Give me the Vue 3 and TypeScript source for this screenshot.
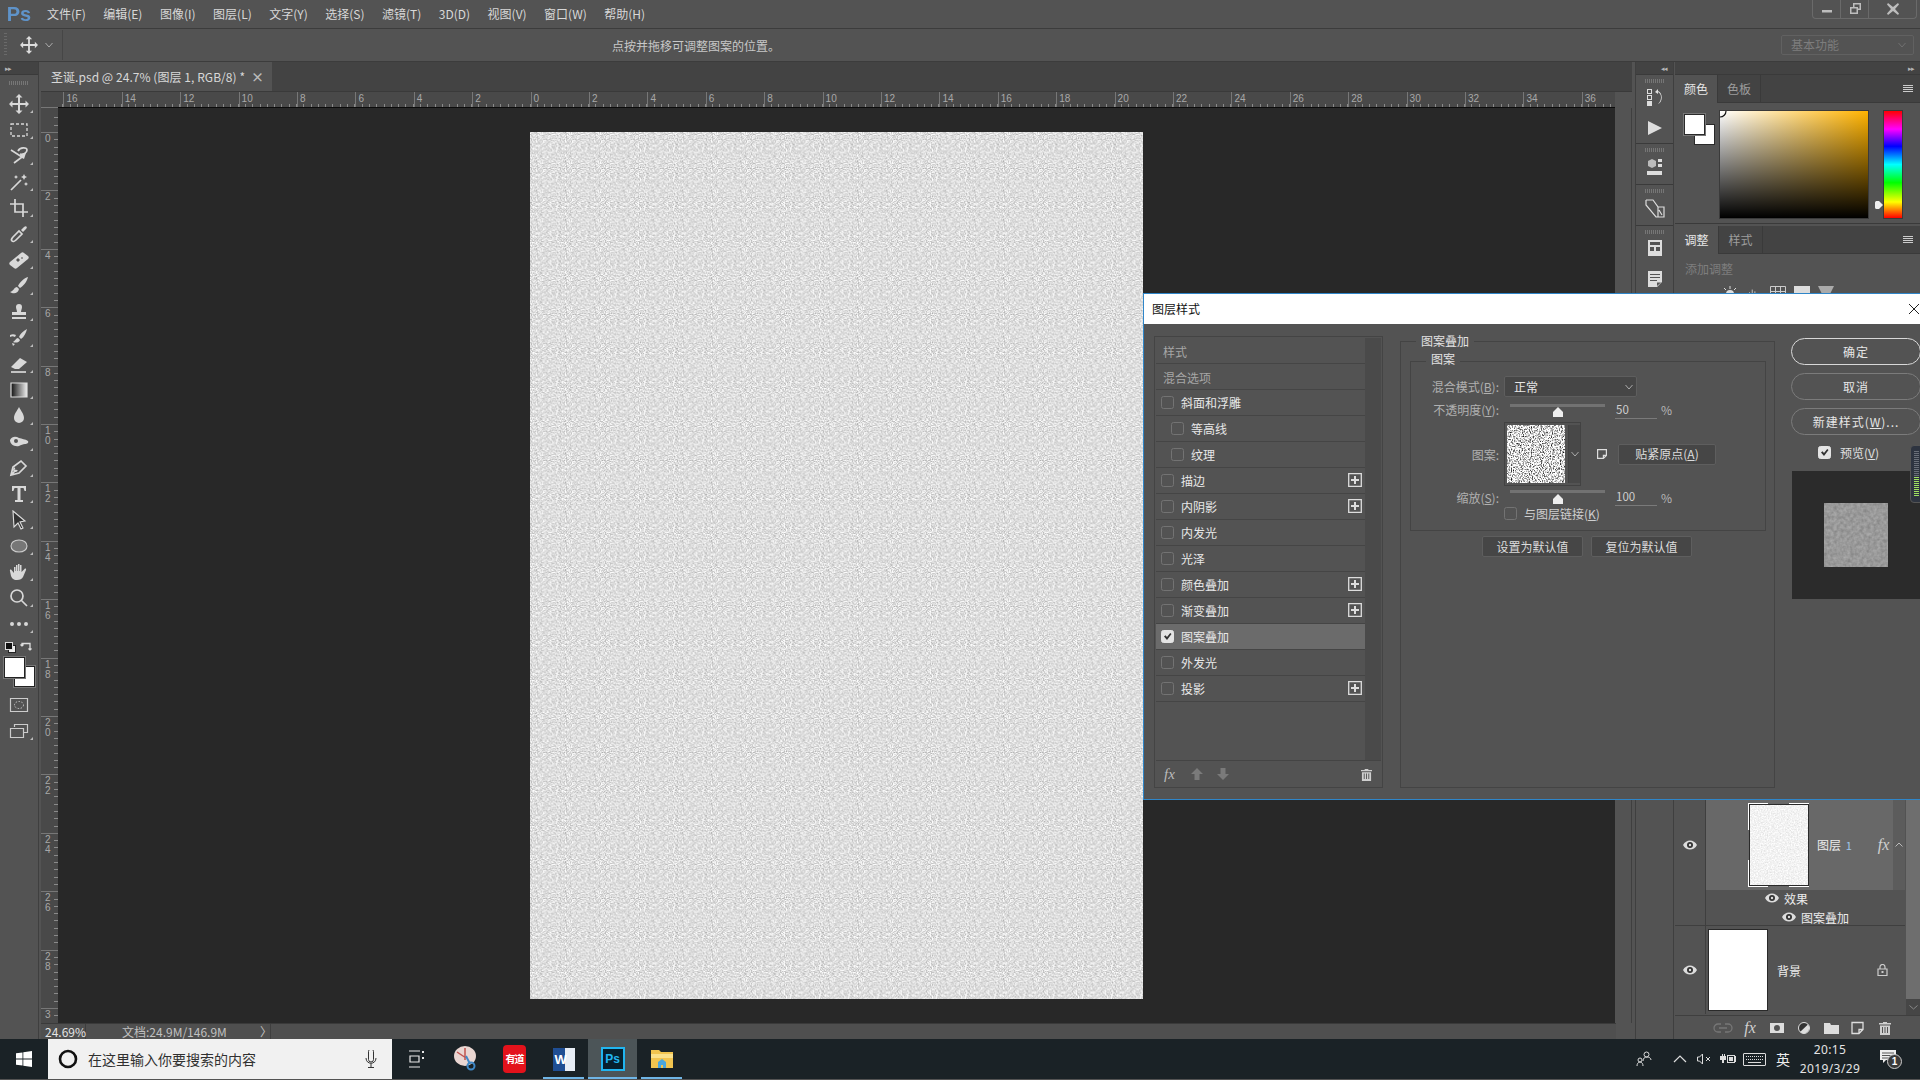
<script setup lang="ts">
const menus = ['文件(F)', '编辑(E)', '图像(I)', '图层(L)', '文字(Y)', '选择(S)', '滤镜(T)', '3D(D)', '视图(V)', '窗口(W)', '帮助(H)']

const moveArrow = 'M10 0l3.500 3.500H11V9h5.500V6.500L20 10l-3.500 3.500V11H11v5.500h2.500L10 20l-3.500-3.500H9V11H3.500v2.500L0 10l3.500-3.500V9H9V3.500H6.500z'

const tools: string[][] = [
  [moveArrow],
  ['-M2 4h16v12H2z'],
  ['~M2 4l11 7-8 6', '~M9 5c2-4 9-4 9-1s-4 5-7 4', 'M12 8l5-1-2 6-4-2z'],
  ['~M2 18L12 8', 'M15 2l1 2 2 1-2 1-1 2-1-2-2-1 2-1zM7 3l.7 1.3L9 5l-1.3.7L7 7l-.7-1.3L5 5l1.3-.7zM17 10l.7 1.3 1.3.7-1.3.7-.7 1.3-.7-1.3-1.3-.7 1.3-.7z'],
  ['~M6 1v13h13', '~M1 6h13v13'],
  ['~M3 17c-1-1 0-3 1-4l6-6 3 3-6 6c-1 1-3 2-4 1z', 'M12 6l3-3c2-2 4 0 2 2l-3 3z'],
  ['M1 12L12 3c1-1 2-1 3 0l4 3c1 1 1 2 0 3L8 18c-1 1-2 1-3 0L1 15c-1-1-1-2 0-3zM9 8l-2 2 2 2 2-2zM13 7l-1 1 1 1 1-1z'],
  ['M19 1c-4 1-8 5-10 9l2 2c3-2 7-6 8-11zM8 11c-3 0-3 4-7 5 3 2 8 2 9-3z'],
  ['M7 5a3 3 0 116 0c0 2-1 3-1 5h5v3H3v-3h5c0-2-1-3-1-5zM3 15h14v2H3z'],
  ['M18 1c-4 2-7 5-8 8l2 2c3-2 5-6 6-10zM9 10c-2 0-3 3-5 4 2 1 6 1 7-2zM1 7c2-1 4-1 6 0l-1 2C4 8 3 8 1 9zM3 15l3 1-2 2z'],
  ['M2 13l9-9 7 4-8 7H6z', '~M2 18h15'],
  ['=M2 3h16v14H2z'],
  ['M10 1c2 4 5 7 5 11a5 5 0 11-10 0c0-4 3-7 5-11z'],
  ['M1 8c2-4 6-4 9-2 3 1 6 1 9 3 1 2-1 3-3 3-2 0-4 1-6 2-5 1-9-2-9-6zM7 7a2 2 0 100 4 2 2 0 000-4z'],
  ['~M2 17l2-8 8-6 5 5-7 7zM2 17l5-5', '~M6 10a1.6 1.6 0 102 2'],
  ['M3 2h14v5h-1.4L14.5 4h-3v12H14v2H6v-2h2.5V4h-3L4.4 7H3z'],
  ['&M4 1l12 10-5 1 3 6-2 1-3-6-4 4z'],
  ['+M10 4c5 0 8 2.700 8 6s-3 6-8 6-8-2.700-8-6 3-6 8-6z'],
  ['M5 9V5h1.500v4H7V3h1.500v6H9V2h1.500v7h.5V3h1.500v7l3-3c1-1 2 0 1.500 1l-3 7c-1 2-3 3-6 3-4 0-5-2-6-4L1 9c-.5-1 .5-2 1.500-1L5 11z'],
  ['~M8 2a6 6 0 100 12A6 6 0 008 2zM12.500 12.500L18 18'],
  ['M3 8a2 2 0 110 4 2 2 0 010-4zM10 8a2 2 0 110 4 2 2 0 010-4zM17 8a2 2 0 110 4 2 2 0 010-4z'],
]
const toolPath = (p: string) => p.replace(/^[~\-=&+]/, '')
const toolClass = (p: string) => ({ '~': 'st', '-': 'dash', '=': 'gd', '&': 'dk', '+': 'gy' }[p[0]] ?? 'fl')

const minorX = Array.from({ length: 214 }, (_, i) => i * 7.3 + 4.4)
const majorX = Array.from({ length: 27 }, (_, i) => ({ x: 5.4 + i * 58.4, n: Math.abs(16 - i * 2) }))
const minorY = Array.from({ length: 124 }, (_, i) => i * 7.3 + 9.4)
const majorY = Array.from({ length: 16 }, (_, i) => ({ y: 24 + i * 58.4, d: i === 15 ? ['3'] : String(i * 2).split('') }))

const styles = [
  { t: '样式', head: true },
  { t: '混合选项', head: true },
  { t: '斜面和浮雕' },
  { t: '等高线', sub: true },
  { t: '纹理', sub: true },
  { t: '描边', plus: true },
  { t: '内阴影', plus: true },
  { t: '内发光' },
  { t: '光泽' },
  { t: '颜色叠加', plus: true },
  { t: '渐变叠加', plus: true },
  { t: '图案叠加', on: true },
  { t: '外发光' },
  { t: '投影', plus: true },
]
</script>

<template>
  <div class="app">
    <svg class="defs" width="0" height="0">
      <defs>
        <linearGradient id="toolGrad" x1="0" x2="1" y1="0" y2="0">
          <stop offset="0" stop-color="#111" /><stop offset="1" stop-color="#eee" />
        </linearGradient>
        <filter id="paperNoise" x="0" y="0" width="100%" height="100%" color-interpolation-filters="sRGB">
          <feTurbulence type="fractalNoise" baseFrequency="0.82" numOctaves="1" seed="7" stitchTiles="stitch" />
          <feColorMatrix result="fine" values="1 0 0 0 0 1 0 0 0 0 1 0 0 0 0 0 0 0 0 1" />
          <feTurbulence type="fractalNoise" baseFrequency="0.3" numOctaves="1" seed="4" stitchTiles="stitch" />
          <feColorMatrix result="coarse" values="1 0 0 0 0 1 0 0 0 0 1 0 0 0 0 0 0 0 0 1" />
          <feComposite in="fine" in2="coarse" operator="arithmetic" k1="0" k2="0.72" k3="0.2" k4="0.41" />
        </filter>
        <filter id="swatchNoise" x="0" y="0" width="100%" height="100%" color-interpolation-filters="sRGB">
          <feTurbulence type="fractalNoise" baseFrequency="0.9 0.7" numOctaves="2" seed="3" />
          <feColorMatrix values="2.400 0 0 0 -0.35 2.400 0 0 0 -0.35 2.400 0 0 0 -0.35 0 0 0 0 1" />
        </filter>
        <filter id="thumbNoise" x="0" y="0" width="100%" height="100%" color-interpolation-filters="sRGB">
          <feTurbulence type="fractalNoise" baseFrequency="0.7" numOctaves="2" seed="5" />
          <feColorMatrix values="0.2 0 0 0 0.85 0.2 0 0 0 0.85 0.2 0 0 0 0.85 0 0 0 0 1" />
        </filter>
        <filter id="prevNoise" x="0" y="0" width="100%" height="100%" color-interpolation-filters="sRGB">
          <feTurbulence type="fractalNoise" baseFrequency="0.3" numOctaves="2" seed="9" />
          <feColorMatrix values="0.2 0 0 0 0.5 0.2 0 0 0 0.5 0.2 0 0 0 0.5 0 0 0 0 1" />
        </filter>
        <pattern id="paperTile" width="29.2" height="29.2" patternUnits="userSpaceOnUse">
          <rect width="29.2" height="29.2" filter="url(#paperNoise)" />
        </pattern>
        <symbol id="eye" viewBox="0 0 14 10">
          <path d="M0 5c3-6 11-6 14 0-3 6-11 6-14 0z" fill="#ddd" />
          <circle cx="7" cy="5" r="3" fill="#333" />
          <circle cx="7" cy="5" r="1.200" fill="#ddd" />
        </symbol>
        <symbol id="plus" viewBox="0 0 14 14">
          <path d="M.7.7h12.600v12.600H.7z" fill="none" stroke="#ddd" stroke-width="1.300" />
          <path d="M6 3h2v3h3v2H8v3H6V8H3V6h3z" fill="#ddd" />
        </symbol>
        <symbol id="check" viewBox="0 0 13 13">
          <path d="M3 6.500l1.500-1.200L6 7l3.200-4 1.300 1L6 10z" fill="#333" />
        </symbol>
        <symbol id="trash" viewBox="0 0 12 14">
          <path d="M4 1h4v1h4v1.500H0V2h4zM1 4.500h10V14H1zM3 6v6h1V6zM5.500 6v6h1V6zM8 6v6h1V6z" fill="#cfcfcf" fill-rule="evenodd" />
        </symbol>
      </defs>
    </svg>

    <header class="menubar">
      <span class="ps-logo">Ps</span>
      <nav class="menus"><span v-for="m in menus" :key="m">{{ m }}</span></nav>
      <div class="win-ctl">
        <span class="wc"><svg width="12" height="12" viewBox="0 0 12 12"><path d="M1 7h10v2.500H1z" /></svg></span>
        <span class="wc"><svg width="12" height="12" viewBox="0 0 12 12"><path fill-rule="evenodd" d="M4 0h8v7H9v4H1V4h3zM5.500 1.500V4H9v1.500h1.500v-4zM2.500 5.500v4h5v-4z" /></svg></span>
        <span class="wc wc-x"><svg width="12" height="12" viewBox="0 0 12 12"><path d="M1 0l5 4 5-4 1 1.500L8 6l4 4.500-1 1.500-5-4-5 4-1-1.500L4 6 0 1.500z" /></svg></span>
      </div>
    </header>

    <section class="options">
      <i class="grip-v"></i>
      <svg class="opt-move" width="18" height="18" viewBox="0 0 20 20"><path fill="#ddd" :d="moveArrow" /></svg>
      <svg class="opt-chev" width="8" height="6" viewBox="0 0 8 6"><path d="M.5 1L4 5l3.500-4" fill="none" stroke="#aaa" /></svg>
      <i class="opt-div"></i>
      <span class="opt-hint">点按并拖移可调整图案的位置。</span>
      <span class="workspace">基本功能<svg width="8" height="6" viewBox="0 0 8 6"><path d="M.5 1L4 5l3.500-4" fill="none" stroke="#707070" /></svg></span>
    </section>

    <main class="main">
      <aside class="toolbar">
        <div class="dock-head left-head"><span>▸▸</span></div>
        <div class="tb-grip"><i></i></div>
        <div v-for="(t, i) in tools" :key="i" class="tool">
          <svg width="20" height="20" viewBox="0 0 20 20">
            <path v-for="(p, j) in t" :key="j" :d="toolPath(p)" :class="toolClass(p)" />
          </svg>
          <i class="corner"></i>
        </div>
        <div class="mini-row">
          <svg width="11" height="11" viewBox="0 0 11 11"><rect x="3.500" y="3.500" width="7" height="7" fill="#eee" stroke="#222" /><rect x=".5" y=".5" width="7" height="7" fill="#111" stroke="#ddd" /></svg>
          <svg width="12" height="11" viewBox="0 0 12 11"><path fill="none" stroke="#ddd" stroke-width="1.300" d="M2 4V1.500h8V8M2 4L.5 2.500M2 4l1.500-1.500M10 8L8.500 6.500M10 8l1.500-1.500" /></svg>
        </div>
        <div class="swatches"><i class="sw-bg"></i><i class="sw-fg"></i></div>
        <div class="tool tool-qm">
          <svg width="20" height="16" viewBox="0 0 20 16"><path d="M1.500 1.500h17v13h-17z" fill="none" stroke="#ccc" stroke-width="1.200" /><ellipse cx="10" cy="8" rx="4.500" ry="3.500" fill="none" stroke="#ccc" stroke-dasharray="1.500 1.500" /></svg>
        </div>
        <div class="tool">
          <svg width="20" height="16" viewBox="0 0 20 16"><path d="M5.500 4V1.500h13v8h-4M1.500 5.500h13v9h-13z" fill="none" stroke="#ccc" stroke-width="1.200" /></svg>
          <i class="corner"></i>
        </div>
      </aside>

      <div class="center">
        <div class="tabbar">
          <div class="tab"><span>圣诞.psd @ 24.7% (图层 1, RGB/8) *</span><b>×</b></div>
        </div>
        <div class="work">
          <div class="ruler-corner"></div>
          <svg class="ruler-top" width="1557" height="16">
            <path v-for="x in minorX" :key="x" :d="`M${Math.round(x) + 0.5} 12v3`" stroke="#8a8a8a" />
            <g v-for="m in majorX" :key="m.x">
              <path :d="`M${Math.round(m.x) + 0.5} 0v15`" stroke="#777" />
              <text :x="m.x + 3" y="10" class="rtxt">{{ m.n }}</text>
            </g>
            <path d="M0 15.500h1557" stroke="#0c0c0c" />
          </svg>
          <div class="filler"></div>
          <svg class="ruler-left" width="17" height="915">
            <path v-for="y in minorY" :key="y" :d="`M13 ${Math.round(y) + 0.5}h4`" stroke="#8a8a8a" />
            <g v-for="m in majorY" :key="m.y">
              <path :d="`M0 ${Math.round(m.y) + 0.5}h17`" stroke="#777" />
              <text v-for="(c, k) in m.d" :key="k" x="4" :y="m.y + 10 + k * 10" class="rtxt">{{ c }}</text>
            </g>
          </svg>
          <div class="canvas">
            <svg class="page" width="613" height="867" viewBox="0 0 613 867">
              <rect width="613" height="867" fill="url(#paperTile)" />
            </svg>
          </div>
          <div class="vscroll"></div>
        </div>
        <footer class="status">
          <span class="zoom">24.69%</span>
          <span class="doc">文档:24.9M/146.9M<em>〉</em></span>
        </footer>
      </div>

      <aside class="dock">
        <div class="dock-head dock-head-r"><span>◂◂</span></div>
        <div class="dock-group g1">
          <i class="grip-h"></i>
          <svg width="18" height="18" viewBox="0 0 18 18"><path fill="#ddd" d="M1 0h5v5H1zM2 1v3h3V1zM1 6h5v5H1zM2 7v3h3V7zM1 12h5v5H1zM12 0l-3 3 3 2v-2c4 2 4 8 0 12 5-2 5-11 0-13z" fill-rule="evenodd" /></svg>
          <svg class="ico-play" width="14" height="14" viewBox="0 0 14 14"><path fill="#ddd" d="M0 0l14 7-14 7z" /></svg>
        </div>
        <div class="dock-group g2">
          <i class="grip-h"></i>
          <svg width="16" height="18" viewBox="0 0 16 18"><path fill="#bbb" d="M5 1l4 2v5l-4 2-4-2V3z" /><path fill="#ddd" d="M11 1h4v3h-4zM11 6h4v3h-4zM0 13h15v4H0z" /></svg>
        </div>
        <div class="dock-group g3">
          <i class="grip-h"></i>
          <svg width="20" height="20" viewBox="0 0 20 20"><path fill="none" stroke="#ddd" stroke-width="1.200" d="M1 1h7l5 7v10M1 1v5l10 12h8V8h-6M14 11l3 5" /></svg>
        </div>
        <div class="dock-group g4">
          <i class="grip-h"></i>
          <svg width="14" height="16" viewBox="0 0 14 16"><path fill="#ddd" fill-rule="evenodd" d="M0 0h14v16H0zM2 2v3h10V2zM2 7v4h4V7zM8 7v4h4V7z" /></svg>
          <svg class="ico-note" width="14" height="16" viewBox="0 0 14 16"><path fill="#ddd" fill-rule="evenodd" d="M0 0h14v11l-5 5H0zM2 3v1h10V3zM2 6v1h10V6zM2 9v1h7V9zM9 11.500V15l4-3.500z" /></svg>
        </div>
      </aside>

      <aside class="panels">
        <div class="dock-head dock-head-p"><span>▸▸</span></div>
        <section class="panel color-panel">
          <div class="ptabs">
            <span class="ptab on">颜色</span><span class="ptab">色板</span>
            <svg class="pmenu" width="10" height="8" viewBox="0 0 10 8"><path stroke="#ccc" d="M0 .5h10M0 2.500h10M0 4.500h10M0 6.500h10" /></svg>
          </div>
          <div class="color-body">
            <div class="color-sw"><i class="c-bg"></i><i class="c-fg"></i></div>
            <div class="sv"><svg width="8" height="8" viewBox="0 0 8 8"><path d="M6 0a6 6 0 01-6 6" fill="none" stroke="#111" stroke-width="1.200" /></svg></div>
            <svg class="hue-mark" width="8" height="8" viewBox="0 0 8 8"><path d="M0 1.500C0 .5 1 0 2 0h2l4 4-4 4H2C1 8 0 7.500 0 6.500z" fill="#eee" /></svg>
            <div class="hue"></div>
          </div>
        </section>
        <section class="panel adjust-panel">
          <div class="ptabs">
            <span class="ptab on w2">调整</span><span class="ptab w2">样式</span>
            <svg class="pmenu" width="10" height="8" viewBox="0 0 10 8"><path stroke="#ccc" d="M0 .5h10M0 2.500h10M0 4.500h10M0 6.500h10" /></svg>
          </div>
          <div class="adj-title">添加调整</div>
          <div class="adj-icons">
            <svg width="16" height="16" viewBox="0 0 16 16"><circle cx="8" cy="8" r="4" fill="#ddd" /><path stroke="#ddd" d="M8 0v3M0 8h3M13 8h3M2 2l2 2M14 2l-2 2" /></svg>
            <svg width="16" height="16" viewBox="0 0 18 16"><path stroke="#ccc" d="M1 14V9M4 14V6M7 14V3M10 14V5M13 14V8M16 14V10" /></svg>
            <svg width="16" height="16" viewBox="0 0 16 16"><path fill="none" stroke="#ccc" d="M.5.500h15v15H.5zM5.500 0v16M10.500 0v16M0 5.500h16" /></svg>
            <svg width="16" height="16" viewBox="0 0 16 16"><path fill="#ddd" d="M0 0h16v16H0z" /></svg>
            <svg width="16" height="16" viewBox="0 0 16 16"><path fill="#aaa" d="M0 0h16l-8 16z" /></svg>
          </div>
        </section>
        <section class="layers">
          <div class="l-body">
            <div class="l-list">
              <div class="lrow lrow1">
                <div class="l-eye"><svg width="14" height="10"><use href="#eye" /></svg></div>
                <div class="l-main sel">
                  <div class="thumb-frame">
                    <svg class="thumb" width="58" height="80" viewBox="0 0 58 80"><rect width="58" height="80" filter="url(#thumbNoise)" /></svg>
                  </div>
                  <span class="l-name">图层 <em>1</em></span>
                  <span class="fx">fx</span>
                </div>
                <div class="l-fold"><svg width="8" height="5" viewBox="0 0 8 5"><path d="M.5 4.500L4 1l3.500 3.500" fill="none" stroke="#bbb" /></svg></div>
              </div>
              <div class="lrow lrow-fx">
                <div class="l-eye"></div>
                <div class="fx-list">
                  <div class="fx-item i1"><svg width="14" height="10"><use href="#eye" /></svg><span>效果</span></div>
                  <div class="fx-item i2"><svg width="14" height="10"><use href="#eye" /></svg><span>图案叠加</span></div>
                </div>
              </div>
              <div class="lrow lrow-bg">
                <div class="l-eye"><svg width="14" height="10"><use href="#eye" /></svg></div>
                <div class="l-main">
                  <i class="thumb-bg"></i>
                  <span class="l-name bgname">背景</span>
                  <svg class="lock" width="11" height="12" viewBox="0 0 11 12"><path fill="none" stroke="#ccc" stroke-width="1.200" d="M1 5h9v6.500H1zM3 5V3a2.500 2.500 0 015 0v2" /><path fill="#ccc" d="M4.500 7h2v2h-2z" /></svg>
                </div>
              </div>
            </div>
            <div class="l-scroll"><i></i><b><svg width="9" height="5" viewBox="0 0 9 5"><path d="M.5.500L4.500 4l4-3.500" fill="none" stroke="#888" /></svg></b></div>
          </div>
          <div class="l-foot">
            <svg width="20" height="14" viewBox="0 0 20 14"><path fill="none" stroke="#777" stroke-width="1.300" d="M8 3H5a4 4 0 000 8h3M12 3h3a4 4 0 010 8h-3M6 7h8" /></svg>
            <span class="fx fx-foot">fx</span>
            <svg width="20" height="14" viewBox="0 0 20 14"><path fill="#ddd" fill-rule="evenodd" d="M3 2h14v10H3zM10 4a3 3 0 100 6 3 3 0 000-6z" /></svg>
            <svg width="20" height="14" viewBox="0 0 20 14"><circle cx="10" cy="7" r="5.500" fill="#333" stroke="#ddd" /><path fill="#ddd" d="M14 3.500a5.500 5.500 0 01-8 7.500z" /></svg>
            <svg width="20" height="14" viewBox="0 0 20 14"><path fill="#ddd" d="M3 2h6l1 2h8v9H3z" /></svg>
            <svg width="20" height="14" viewBox="0 0 20 14"><path fill="none" stroke="#ddd" stroke-width="1.300" d="M4 1.500h11v7l-4 4H4zM11 12.500v-4h4" /></svg>
            <svg width="20" height="14" viewBox="0 0 12 14"><use href="#trash" /></svg>
          </div>
        </section>
      </aside>
    </main>

    <footer class="taskbar">
      <div class="start"><svg width="16" height="16" viewBox="0 0 16 16"><path fill="#fff" d="M0 2.300l6.500-.9v6.200H0zM7.300 1.300L16 0v7.600H7.300zM0 8.400h6.500v6.200L0 13.700zM7.300 8.400H16V16l-8.700-1.300z" /></svg></div>
      <div class="search">
        <svg width="20" height="20" viewBox="0 0 20 20"><circle cx="10" cy="10" r="8" fill="none" stroke="#111" stroke-width="2.600" /></svg>
        <span>在这里输入你要搜索的内容</span>
        <svg class="mic" width="12" height="18" viewBox="0 0 12 18"><path fill="none" stroke="#333" d="M3.500 1.500a2.500 2.500 0 015 0v8a2.500 2.500 0 01-5 0zM1 8c0 7 10 7 10 0M6 13.500V17M3 17.500h6" /></svg>
      </div>
      <div class="task-btn tv"><svg width="16" height="18" viewBox="0 0 16 18"><path fill="none" stroke="#e8e8e8" stroke-width="1.200" d="M0 1h11M0 17h11M1 6h9v6H1z" /><path fill="#e8e8e8" d="M13 1h2v2h-2zM13 7h2v2h-2z" /></svg></div>
      <div class="task-btn"><svg width="26" height="28" viewBox="0 0 26 28"><ellipse cx="12" cy="11" rx="11" ry="10" fill="#e9d6d2" /><path d="M12 3v12M4 7l9 6" stroke="#c0534e" stroke-width="1.500" /><circle cx="18" cy="21" r="3.500" fill="none" stroke="#3f88c7" stroke-width="2" /><path d="M13 11l4 8" stroke="#3f88c7" stroke-width="2" /></svg></div>
      <div class="task-btn"><span class="youdao">有道</span></div>
      <div class="task-btn active-line"><span class="word"><b>W</b></span></div>
      <div class="task-btn ps-active active-line"><span class="ps-task">Ps</span></div>
      <div class="task-btn active-line"><svg width="22" height="20" viewBox="0 0 22 20"><path fill="#f2c44f" d="M0 1h8l2 2h12v16H0z" /><path fill="#fbe08a" d="M0 5h22v4H0z" /><path fill="#4ba6dd" d="M7 13l4-3 4 3v6h-3v-3h-2v3H7z" /></svg></div>
      <div class="tray">
        <svg width="16" height="16" viewBox="0 0 16 16"><path fill="none" stroke="#ddd" d="M10.500 1a2.500 2.500 0 100 5 2.500 2.500 0 000-5zM7 10c0-3 2-4 4-4s4 1 4 3M4 7a2 2 0 100 4 2 2 0 000-4zM1 15c0-2 1-4 3-4s3 2 3 4" /></svg>
        <svg class="t-up" width="14" height="8" viewBox="0 0 14 8"><path d="M1 7l6-6 6 6" fill="none" stroke="#ddd" stroke-width="1.200" /></svg>
        <svg class="t-vol" width="14" height="12" viewBox="0 0 14 12"><path d="M.5 4h2l3-3v10l-3-3h-2zM9 4l4 4M13 4l-4 4" fill="none" stroke="#ddd" /></svg>
        <svg width="16" height="12" viewBox="0 0 16 12"><path fill="#ddd" d="M0 3h2V1h1v2h1V1h1v2h1v4H4v3H2V7H0zM7 2h8v1h1v6h-1v1H7zM8 3v6h6V3z" /><path fill="#ddd" d="M9 4h4v4H9z" /></svg>
        <svg class="t-kbd" width="23" height="13" viewBox="0 0 23 13"><path fill="none" stroke="#ddd" d="M1 .5h21a.5.5 0 01.5.5v11a.5.5 0 01-.5.5H1a.5.5 0 01-.5-.5V1A.5.5 0 011 .5zM5 9.500h13" /><path stroke="#ddd" stroke-dasharray="1 1" d="M3 3.500h17M3 6.500h17" /></svg>
        <span class="ime">英</span>
        <div class="clock"><span>20:15</span><span>2019/3/29</span></div>
        <div class="notif">
          <svg width="16" height="13" viewBox="0 0 16 13"><path fill="#eee" d="M0 0h16v10H6l-3 3v-3H0z" /><path stroke="#555" d="M2 3h12M2 5.500h12M2 8h8" /></svg>
          <span>1</span>
        </div>
      </div>
    </footer>

    <div class="dialog">
      <div class="dlg-title"><span>图层样式</span><svg width="12" height="12" viewBox="0 0 12 12"><path d="M1 1l10 10M11 1L1 11" stroke="#222" /></svg></div>
      <div class="dlg-body">
        <div class="stylelist">
          <div class="sl-inner">
            <div class="sl-rows">
              <div v-for="s in styles" :key="s.t" class="sl-row" :class="{ head: s.head, sub: s.sub, on: s.on }">
                <span v-if="!s.head" class="cb" :class="{ checked: s.on }"><svg v-if="s.on" width="13" height="13"><use href="#check" /></svg></span>
                <span class="sl-t">{{ s.t }}</span>
                <svg v-if="s.plus" class="sl-plus" width="14" height="14"><use href="#plus" /></svg>
              </div>
            </div>
            <div class="sl-scroll"></div>
          </div>
          <div class="sl-foot">
            <span class="fx fx-dim">fx</span>
            <svg class="sl-up" width="12" height="12" viewBox="0 0 12 12"><path fill="#7a7a7a" d="M6 0l6 6H8.500v6h-5V6H0z" /></svg>
            <svg class="sl-down" width="12" height="12" viewBox="0 0 12 12"><path fill="#7a7a7a" d="M6 12l6-6H8.500V0h-5v6H0z" /></svg>
            <svg class="sl-trash" width="11" height="13" viewBox="0 0 12 14"><use href="#trash" /></svg>
          </div>
        </div>

        <div class="group outer">
          <span class="legend">图案叠加</span>
          <div class="group inner">
            <span class="legend">图案</span>
            <div class="frow r-blend">
              <label class="flabel">混合模式(<u>B</u>):</label>
              <div class="select"><span>正常</span><svg width="8" height="6" viewBox="0 0 8 6"><path d="M.5 1L4 5l3.500-4" fill="none" stroke="#aaa" /></svg></div>
            </div>
            <div class="frow r-slider">
              <label class="flabel">不透明度(<u>Y</u>):</label>
              <div class="slider"><i class="track"></i><svg class="thumb-s" width="12" height="10" viewBox="0 0 12 10"><path fill="#eee" d="M6 0l5 5v5H1V5z" /></svg></div>
              <span class="val">50</span><span class="pct">%</span>
            </div>
            <div class="frow r-pat">
              <label class="flabel">图案:</label>
              <div class="patbox">
                <svg class="pat" width="58" height="58" viewBox="0 0 58 58"><rect width="58" height="58" filter="url(#swatchNoise)" /></svg>
                <span class="pat-drop"><svg width="8" height="6" viewBox="0 0 8 6"><path d="M.5 1L4 5l3.500-4" fill="none" stroke="#aaa" /></svg></span>
              </div>
              <svg class="pat-new" width="10" height="10" viewBox="0 0 10 10"><path fill="none" stroke="#ddd" stroke-width="1.200" d="M.6.600h8.800v5.800l-3 3H.6zM6.400 9.400V6.400h3" /></svg>
              <button class="pbtn snap">贴紧原点(<u>A</u>)</button>
            </div>
            <div class="frow r-slider r-scale">
              <label class="flabel">缩放(<u>S</u>):</label>
              <div class="slider"><i class="track"></i><svg class="thumb-s" width="12" height="10" viewBox="0 0 12 10"><path fill="#eee" d="M6 0l5 5v5H1V5z" /></svg></div>
              <span class="val">100</span><span class="pct">%</span>
            </div>
            <div class="frow r-link">
              <span class="cb"></span><span class="link-t">与图层链接(<u>K</u>)</span>
            </div>
          </div>
          <div class="def-btns">
            <button class="pbtn dbtn">设置为默认值</button>
            <button class="pbtn dbtn">复位为默认值</button>
          </div>
        </div>

        <div class="actions">
          <button class="rbtn primary">确定</button>
          <button class="rbtn">取消</button>
          <button class="rbtn">新建样式(<u>W</u>)...</button>
          <div class="preview-row"><span class="cb checked"><svg width="13" height="13"><use href="#check" /></svg></span><span>预览(<u>V</u>)</span></div>
          <div class="preview">
            <svg width="64" height="64" viewBox="0 0 64 64"><rect width="64" height="64" filter="url(#prevNoise)" /></svg>
          </div>
        </div>
      </div>
    </div>
    <div class="ime-bar"><i class="ib-d"></i><i class="ib-g"></i></div>
  </div>
</template>

<style>
html, body { margin: 0; background: #535353; overflow: hidden; }
</style>

<style scoped>
.app {
  position: relative;
  width: 1920px;
  height: 1080px;
  overflow: hidden;
  display: flex;
  flex-direction: column;
  background: #535353;
  color: #d8d8d8;
  font-family: "Noto Sans CJK SC", "Noto Sans", sans-serif;
  font-size: 12px;
}
.defs { position: absolute; }
i, em { font-style: normal; }
u { text-decoration: underline; }

.menubar { height: 28px; flex: none; display: flex; align-items: center; border-bottom: 1px solid #3c3c3c; position: relative; }
.ps-logo { width: 47px; padding-left: 7px; box-sizing: border-box; font: bold 21px/28px "Liberation Sans", sans-serif; color: #5f93c9; transform: scaleX(.95); transform-origin: left; }
.menus { display: flex; gap: 17.500px; line-height: 28px; }
.menus span { white-space: nowrap; }
.win-ctl { margin-left: auto; margin-right: 3px; align-self: flex-start; height: 18px; display: flex; border: 1px solid #6a6a6a; border-top: 0; border-radius: 0 0 4px 4px; }
.wc { width: 27px; display: flex; align-items: center; justify-content: center; border-left: 1px solid #6a6a6a; }
.wc:first-child { border-left: 0; }
.wc svg { fill: #bdbdbd; }
.wc-x { width: 47px; }

.options { height: 33px; flex: none; display: flex; align-items: center; position: relative; border-bottom: 1px solid #3c3c3c; box-sizing: border-box; }
.grip-v { width: 3px; height: 24px; margin-left: 4px; background: repeating-linear-gradient(to bottom, #6a6a6a 0 1px, transparent 1px 3px); }
.opt-move { margin-left: 13px; }
.opt-chev { margin-left: 7px; }
.opt-div { width: 1px; height: 30px; margin-left: 9px; background: #464646; }
.opt-hint { margin-left: 549px; color: #c8c8c8; white-space: nowrap; }
.workspace { margin-left: auto; margin-right: 6px; width: 133px; height: 20px; box-sizing: border-box; padding: 0 7px 0 9px; border: 1px solid #616161; border-radius: 2px; display: flex; align-items: center; justify-content: space-between; color: #7d7d7d; line-height: 18px; }

.main { flex: none; height: 978px; display: flex; }
.toolbar { width: 38px; margin-right: 2px; flex: none; border-right: 1px solid #3f3f3f; box-sizing: content-box; display: flex; flex-direction: column; align-items: stretch; }
.dock-head { height: 12px; background: #434343; border-bottom: 1px solid #3a3a3a; font-size: 7px; line-height: 12px; color: #b5b5b5; letter-spacing: -1px; overflow: hidden; }
.left-head { padding-left: 5px; }
.tb-grip { height: 16px; display: flex; align-items: center; justify-content: center; }
.tb-grip i, .grip-h { display: block; width: 20px; height: 4px; background: repeating-linear-gradient(to right, #767676 0 1px, transparent 1px 2px); }
.tool { height: 26px; flex: none; position: relative; display: flex; align-items: center; justify-content: center; }
.corner { position: absolute; right: 5px; bottom: 4px; width: 0; height: 0; border-left: 3px solid transparent; border-bottom: 3px solid #bbb; }
.fl { fill: #d8d8d8; }
.st { fill: none; stroke: #d8d8d8; stroke-width: 1.700; }
.dash { fill: none; stroke: #d8d8d8; stroke-width: 1.300; stroke-dasharray: 3 2; }
.gd { fill: url(#toolGrad); stroke: #ddd; stroke-width: 1.200; }
.dk { fill: #333; stroke: #ddd; stroke-width: 1.100; }
.gy { fill: #777; stroke: #ccc; stroke-width: 1.100; }
.mini-row { height: 14px; margin-top: 3px; padding: 0 6px 0 5px; display: flex; justify-content: space-between; align-items: center; }
.swatches { position: relative; height: 31px; margin-top: 3px; }
.sw-fg, .sw-bg { position: absolute; width: 19px; height: 19px; background: #fff; border: 1px solid #222; outline: 1px solid #777; }
.sw-fg { left: 4px; top: 0; }
.sw-bg { left: 14px; top: 9px; }
.tool-qm { margin-top: 4px; }

.center { width: 1594px; flex: none; display: flex; flex-direction: column; }
.tabbar { height: 30px; flex: none; background: #434343; border-bottom: 1px solid #3a3a3a; box-sizing: border-box; width: 1591px; }
.tab { width: 231px; height: 29px; background: #535353; display: flex; align-items: center; justify-content: space-between; padding: 0 8px 0 10px; box-sizing: border-box; white-space: nowrap; color: #d8d8d8; }
.tab span { letter-spacing: .05px; }
.tab b { font-size: 13px; color: #bbb; }
.work { display: grid; grid-template-columns: 17px 1557px 20px; grid-template-rows: 16px 915px; }
.ruler-corner { background: #494949; border-bottom: 1px solid #777; box-sizing: border-box; }
.ruler-top { display: block; background: #494949; overflow: hidden; }
.filler { background: #535353; }
.ruler-left { display: block; background: #494949; }
.rtxt { font: 10px "Liberation Sans", sans-serif; fill: #a8a8a8; }
.canvas { background: #282828; padding: 24px 0 0 472px; box-sizing: border-box; overflow: hidden; }
.page { display: block; }
.vscroll { background: #535353; border-right: 1px solid #3f3f3f; width: 17px; box-sizing: border-box; }
.status { height: 17px; flex: none; display: flex; line-height: 16px; background: #4f4f4f; color: #c0c0c0; border-top: 1px solid #3a3a3a; box-sizing: border-box; width: 1575px; }
.zoom { width: 45px; padding-left: 4px; box-sizing: border-box; border-right: 1px solid #3f3f3f; color: #e4e4e4; white-space: nowrap; }
.doc { width: 185px; padding-left: 36px; box-sizing: border-box; display: flex; justify-content: space-between; border-right: 1px solid #3f3f3f; white-space: nowrap; }
.doc em { margin-right: -2px; }

.dock { width: 37px; flex: none; border-left: 1px solid #3f3f3f; border-right: 1px solid #3f3f3f; margin-right: 1px; display: flex; flex-direction: column; }
.dock-head-r { text-align: right; padding-right: 6px; }
.dock-group { display: flex; flex-direction: column; align-items: center; border-bottom: 1px solid #3a3a3a; padding-top: 4px; box-sizing: border-box; }
.dock-group svg { margin-top: 6px; }
.g1 { height: 69px; }
.ico-play { margin-top: 14px !important; }
.g2, .g3 { height: 41px; }
.g4 { flex: 1; border-bottom: 0; }
.ico-note { margin-top: 15px !important; }

.panels { width: 245px; flex: none; display: flex; flex-direction: column; }
.dock-head-p { text-align: right; padding-right: 6px; }
.panel { border-bottom: 1px solid #3a3a3a; }
.ptabs { height: 28px; display: flex; position: relative; background: #434343; border-bottom: 1px solid #3a3a3a; box-sizing: border-box; line-height: 27px; }
.ptab { width: 42px; text-align: center; color: #9d9d9d; border-right: 1px solid #3a3a3a; font-size: 12px; }
.ptab.on { background: #535353; color: #e8e8e8; height: 28px; }
.w2 { width: 43px; }
.pmenu { position: absolute; right: 7px; top: 10px; }
.color-panel { height: 149px; box-sizing: border-box; }
.color-body { display: flex; padding: 7px 0 0 0; position: relative; }
.color-sw { position: relative; width: 44px; height: 40px; }
.c-fg, .c-bg { position: absolute; width: 19px; height: 19px; background: #fff; border: 1px solid #2a2a2a; }
.c-bg { left: 19px; top: 14px; }
.c-fg { left: 9px; top: 4px; outline: 1px solid #777; }
.sv { width: 148px; height: 107px; border: 1px solid #3a3a3a; margin-top: -.5px; background: linear-gradient(to top, #000, transparent), linear-gradient(to right, #fff, #ffb300); }
.sv svg { display: block; }
.hue-mark { margin: 91px 0 0 6px; }
.hue { width: 18px; height: 107px; border: 1px solid #3a3a3a; background: linear-gradient(to bottom, #f00 0, #f0f 17%, #00f 33%, #0ff 50%, #0f0 67%, #ff0 85%, #f00 100%); }
.adjust-panel { height: 573px; box-sizing: border-box; margin-top: 2px; }
.adj-title { margin: 6px 0 0 10px; color: #7e7e7e; line-height: 18px; }
.adj-icons { display: flex; gap: 8px; padding: 8px 0 0 47px; }

.layers { flex: 1; display: flex; flex-direction: column; min-height: 0; }
.l-body { height: 216px; display: flex; }
.l-list { width: 230px; }
.lrow { display: flex; border-bottom: 1px solid #3f3f3f; box-sizing: border-box; }
.lrow1 { height: 91px; border-bottom: 0; }
.l-eye { width: 31px; flex: none; display: flex; align-items: center; justify-content: center; border-right: 1px solid #3f3f3f; box-sizing: border-box; }
.l-main { flex: 1; display: flex; align-items: center; position: relative; }
.sel { background: #686868; }
.thumb-frame {
  margin-left: 42px;
  width: 61px;
  height: 84px;
  box-sizing: border-box;
  display: flex;
  align-items: center;
  justify-content: center;
  background:
    linear-gradient(#fff, #fff) left top / 20px 1px no-repeat,
    linear-gradient(#fff, #fff) right top / 20px 1px no-repeat,
    linear-gradient(#fff, #fff) left bottom / 20px 1px no-repeat,
    linear-gradient(#fff, #fff) right bottom / 20px 1px no-repeat,
    linear-gradient(#fff, #fff) left top / 1px 27px no-repeat,
    linear-gradient(#fff, #fff) right top / 1px 27px no-repeat,
    linear-gradient(#fff, #fff) left bottom / 1px 27px no-repeat,
    linear-gradient(#fff, #fff) right bottom / 1px 27px no-repeat;
}
.thumb { outline: 1.500px solid #2a2a2a; display: block; }
.l-name { margin-left: 8px; color: #ececec; }
.l-name em { color: #9fc6e8; font-size: 11px; margin-left: 2px; }
.fx { font: italic 16px "Liberation Serif", serif; color: #d0d0d0; }
.sel .fx { margin-left: 26px; }
.l-fold { width: 12px; flex: none; background: #5c5c5c; display: flex; justify-content: center; align-items: center; }
.lrow-fx { height: 36px; }
.fx-list { display: flex; flex-direction: column; justify-content: center; line-height: 19px; color: #ececec; }
.fx-item { display: flex; align-items: center; gap: 5px; }
.i1 { margin-left: 59px; }
.i2 { margin-left: 76px; }
.lrow-bg { height: 88px; border-bottom: 0; }
.thumb-bg { display: block; width: 58px; height: 80px; margin-left: 3px; background: #fff; outline: 1px solid #2a2a2a; }
.bgname { margin-left: 10px; }
.lock { margin-left: 76px; }
.l-scroll { width: 14px; margin-left: 1px; display: flex; flex-direction: column; }
.l-scroll i { flex: 1; background: #6e6e6e; }
.l-scroll b { height: 16px; background: #464646; display: flex; justify-content: center; align-items: center; }
.l-foot { flex: 1; display: flex; align-items: flex-start; gap: 7px; padding: 5px 0 0 38px; border-top: 1px solid #3f3f3f; box-sizing: border-box; background: #535353; }
.fx-foot { width: 20px; text-align: center; line-height: 14px; }

.taskbar { height: 40px; flex: none; display: flex; align-items: stretch; background: #1a2226; margin-top: -1px; position: relative; }
.start { width: 48px; display: flex; align-items: center; justify-content: center; }
.search { width: 344px; background: #f1f1f1; display: flex; align-items: center; padding: 0 15px 0 10px; box-sizing: border-box; color: #303030; font-size: 14px; }
.search span { margin-left: 10px; flex: 1; white-space: nowrap; }
.mic { display: block; }
.task-btn { width: 49px; display: flex; align-items: center; justify-content: center; position: relative; }
.active-line::after { content: ""; position: absolute; left: 4px; right: 4px; bottom: 0; height: 2px; background: #6fb5e6; }
.ps-active { background: #4c5558; }
.ps-active::after { left: 0; right: 0; }
.youdao { width: 23px; height: 28px; border-radius: 4px; background: #e3121b; color: #fff; font-size: 10px; font-weight: 700; line-height: 28px; text-align: center; white-space: nowrap; letter-spacing: -1px; }
.word { width: 22px; height: 23px; background: linear-gradient(to right, #1f4e93 55%, #e8eef6 55%); display: flex; align-items: center; padding-left: 2px; box-sizing: border-box; color: #fff; font: bold 13px "Liberation Sans", sans-serif; }
.ps-task { width: 20px; height: 20px; border: 2px solid #21b5f0; background: #07202e; color: #21b5f0; font: bold 12px/20px "Liberation Sans", sans-serif; text-align: center; }
.tray { margin-left: auto; display: flex; align-items: center; color: #eee; padding-right: 17px; position: relative; }
.tray > svg { margin-left: 9px; }
.tray > .t-up { margin-left: 21px; }
.tray > .t-vol { margin-left: 10px; }
.tray > .t-kbd { margin-left: 7px; }
.ime { margin-left: 10px; font-size: 14px; }
.clock { width: 78px; margin-left: 1px; display: flex; flex-direction: column; align-items: center; line-height: 19px; font-size: 12px; color: #e4e4e4; font-family: "Noto Sans", sans-serif; letter-spacing: .4px; }
.notif { position: relative; margin-left: 11px; width: 23px; height: 20px; }
.notif span { position: absolute; left: 7px; top: 5px; width: 15px; height: 15px; border-radius: 50%; background: #3a3a3a; border: 1px solid #ccc; box-sizing: border-box; text-align: center; font: bold 10px/13px "Liberation Sans", sans-serif; color: #fff; }

.dialog { position: absolute; left: 1143px; top: 293px; width: 790px; height: 507px; box-sizing: border-box; background: #535353; border: 1px solid #2f86c9; border-right: 0; display: flex; flex-direction: column; }
.dlg-title { height: 30px; flex: none; background: #fff; color: #111; display: flex; align-items: center; justify-content: space-between; padding-left: 8px; width: 776px; box-sizing: border-box; line-height: 28px; }
.dlg-body { display: flex; padding: 12px 0 0 10px; align-items: flex-start; }
.stylelist { width: 229px; height: 452px; flex: none; box-sizing: border-box; border: 1px solid #444; display: flex; flex-direction: column; padding: 1px 1px 0 1px; }
.sl-inner { flex: 1; display: flex; min-height: 0; border-bottom: 1px solid #444; }
.sl-rows { width: 210px; }
.sl-row { height: 26px; box-sizing: border-box; border-bottom: 1px solid #454545; display: flex; align-items: center; padding-left: 5px; color: #e8e8e8; position: relative; }
.sl-row.head { color: #a6a6a6; padding-left: 7px; }
.sl-row.sub { padding-left: 15px; }
.sl-row.on { background: #6b6b6b; }
.sl-t { margin-left: 7px; line-height: 25px; }
.head .sl-t { margin-left: 0; padding-top: 1px; }
.sl-plus { position: absolute; right: 3px; top: 5px; }
.sl-scroll { width: 16px; background: #4a4a4a; }
.sl-foot { height: 26px; flex: none; display: flex; align-items: center; padding-left: 8px; position: relative; }
.fx-dim { width: 22px; color: #bbb; font-size: 15px; }
.sl-up { margin-left: 5px; }
.sl-down { margin-left: 14px; }
.sl-trash { position: absolute; right: 9px; top: 7px; }
.cb { width: 13px; height: 13px; box-sizing: border-box; flex: none; border: 1.500px solid #737373; border-radius: 2.500px; display: inline-block; position: relative; }
.cb svg { position: absolute; left: -1.500px; top: -1.500px; }
.cb.checked { background: #e4e4e4; border-color: #e4e4e4; }

.group { position: relative; border: 1px solid #444; box-sizing: border-box; }
.legend { position: absolute; top: -8px; left: 15px; padding: 0 5px; line-height: 14px; background: #535353; color: #e2e2e2; white-space: nowrap; }
.inner .legend { top: -10px; }
.outer { width: 375px; height: 447px; margin: 5px 0 0 17px; flex: none; padding: 19px 8px 0 9px; }
.inner { height: 170px; padding-top: 14px; }
.frow { display: flex; align-items: center; }
.flabel { width: 88px; text-align: right; margin-right: 5px; color: #b0b0b0; flex: none; white-space: nowrap; }
.r-blend { height: 21px; }
.select { width: 133px; height: 21px; box-sizing: border-box; background: #464646; border: 1px solid #5e5e5e; border-radius: 2px; display: flex; align-items: center; justify-content: space-between; padding: 0 3px 0 9px; color: #e6e6e6; }
.r-slider { height: 25px; }
.slider { width: 95px; margin-left: 6px; height: 25px; position: relative; }
.track { position: absolute; left: 0; right: 0; top: 7px; height: 3px; background: #727272; }
.thumb-s { position: absolute; left: 42px; top: 10px; }
.val { margin-left: 10px; width: 42px; height: 18px; line-height: 17px; padding-left: 1px; box-sizing: border-box; border-bottom: 1px solid #7a7a7a; color: #cfcfcf; font-size: 11.500px; }
.pct { margin-left: 4px; color: #b8b8b8; }
.r-pat { height: 64px; }
.patbox { width: 77px; height: 64px; box-sizing: border-box; border: 1px solid #424242; display: flex; padding: 2px 0 2px 2px; }
.pat { display: block; }
.pat-drop { margin-left: 3px; flex: 1; background: #484848; border-left: 1px solid #424242; display: flex; align-items: center; justify-content: center; }
.pat-new { margin-left: 16px; }
.pbtn { font: 12px "Noto Sans CJK SC", sans-serif; color: #dcdcdc; height: 21px; padding: 0; background: #464646; border: 1px solid #5e5e5e; border-radius: 2px; line-height: 18px; white-space: nowrap; }
.snap { width: 98px; margin-left: 11px; }
.r-scale { height: 22px; }
.r-scale .track { top: 5px; }
.r-scale .thumb-s { top: 9px; }
.r-link { height: 14px; margin-top: -2px; padding-left: 93px; }
.link-t { margin-left: 7px; color: #cfcfcf; white-space: nowrap; }
.def-btns { display: flex; gap: 8px; padding: 5px 0 0 72px; }
.dbtn { width: 101px; }
.actions { width: 130px; flex: none; margin: 2px 0 0 16px; display: flex; flex-direction: column; align-items: stretch; }
.rbtn { height: 27px; margin-bottom: 8px; border-radius: 14px; background: transparent; border: 1px solid #7b7b7b; color: #e6e6e6; font: 12px "Noto Sans CJK SC", sans-serif; letter-spacing: 1px; padding: 0; white-space: nowrap; }
.rbtn.primary { border-color: #d8d8d8; }
.preview-row { display: flex; align-items: center; height: 17px; margin: 1px 0 0 27px; gap: 9px; color: #e0e0e0; }
.preview { margin-top: 10px; margin-left: 1px; height: 128px; background: #2b2b2b; display: flex; align-items: center; padding-left: 32px; }
.ime-bar { position: absolute; left: 1910px; top: 445px; width: 12px; height: 58px; background: #2e3440; border: 1px solid #555; border-radius: 4px 0 0 4px; box-sizing: border-box; padding: 5px 0 0 3px; }
.ib-d { display: block; width: 5px; height: 26px; background: repeating-linear-gradient(to bottom, #6a6f78 0 1px, transparent 1px 2px); }
.ib-g { display: block; width: 5px; height: 20px; background: repeating-linear-gradient(to bottom, #9fe060 0 1px, transparent 1px 2px); }
</style>
